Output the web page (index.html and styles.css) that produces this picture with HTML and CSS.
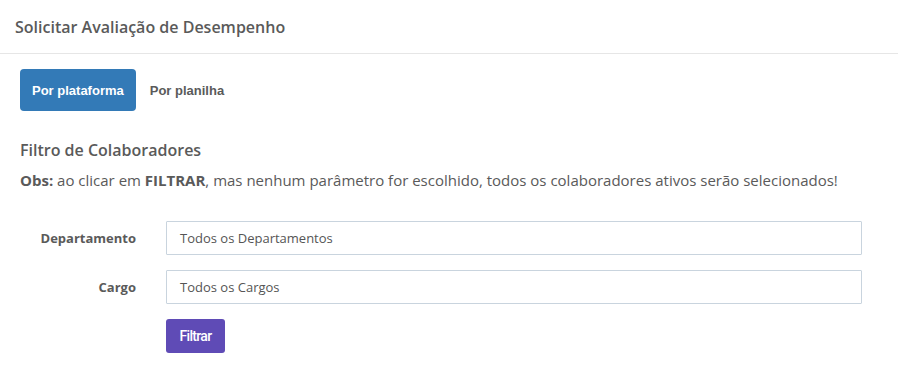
FILE: index.html
```html
<!DOCTYPE html>
<html lang="pt-BR">
<head>
    <meta charset="UTF-8">
    <title>Solicitar Avaliação de Desempenho</title>
    <link rel="stylesheet" href="styles.css">
</head>
<body>
    <div class="panel">
        <div class="panel-header">
            <h1>Solicitar Avaliação de Desempenho</h1>
        </div>

        <div class="panel-body">
            <div class="tabs">
                <button class="tab active">Por plataforma</button>
                <button class="tab">Por planilha</button>
            </div>

            <h2>Filtro de Colaboradores</h2>
            <p class="obs"><b>Obs:</b> ao clicar em <b>FILTRAR</b>, mas nenhum parâmetro for escolhido, todos os colaboradores ativos serão selecionados!</p>

            <form class="filter-form">
                <div class="form-row">
                    <label>Departamento</label>
                    <div class="field">Todos os Departamentos</div>
                </div>
                <div class="form-row">
                    <label>Cargo</label>
                    <div class="field">Todos os Cargos</div>
                </div>
                <div class="form-row">
                    <span></span>
                    <div><button type="button" class="btn-filter">Filtrar</button></div>
                </div>
            </form>
        </div>
    </div>
</body>
</html>
```

FILE: styles.css
```css
:root {
    --text: #5a5a5a;
    --border: #e6e6e6;
    --field-border: #c9d4de;
    --primary: #337ab7;
    --purple: #5f4bb6;
}

body {
    margin: 0;
    background: #ffffff;
    font-family: 'Open Sans', sans-serif;
    color: var(--text);
}

.panel-header {
    height: 53px;
    border-bottom: 1px solid var(--border);
    padding: 0 15px;
    display: flex;
    align-items: center;
}

.panel-header h1 {
    margin: 0;
    font-size: 16px;
    font-weight: 600;
    color: var(--text);
}

.panel-body {
    padding: 15px 20px;
}

.tabs {
    display: flex;
    align-items: center;
    gap: 2px;
}

.tab {
    height: 42px;
    padding: 0 12px;
    border: none;
    border-radius: 4px;
    background: transparent;
    font-family: 'Liberation Sans', Arial, sans-serif;
    font-size: 13px;
    font-weight: 700;
    color: var(--text);
}

.tab.active {
    background: var(--primary);
    color: #ffffff;
}

h2 {
    margin: 28px 0 0;
    font-size: 16px;
    font-weight: 600;
    line-height: 22px;
}

.obs {
    margin: 9px 0 0;
    font-size: 15px;
    line-height: 20px;
}

.obs b {
    font-weight: 700;
}

.filter-form {
    margin-top: 31px;
    display: flex;
    flex-direction: column;
    gap: 15px;
}

.form-row {
    display: grid;
    grid-template-columns: 116px 1fr;
    column-gap: 30px;
    align-items: center;
    padding-right: 16px;
}

.form-row label {
    text-align: right;
    font-size: 13px;
    font-weight: 700;
}

.field {
    height: 32px;
    border: 1px solid var(--field-border);
    border-radius: 1px;
    padding: 0 13px;
    display: flex;
    align-items: center;
    font-size: 13px;
    color: #555555;
}

.btn-filter {
    width: 59px;
    height: 34px;
    padding: 0;
    border: none;
    border-radius: 3px;
    background: var(--purple);
    color: #ffffff;
    font-family: 'Roboto', sans-serif;
    font-size: 14px;
    font-weight: 500;
    letter-spacing: -0.7px;
}
```
